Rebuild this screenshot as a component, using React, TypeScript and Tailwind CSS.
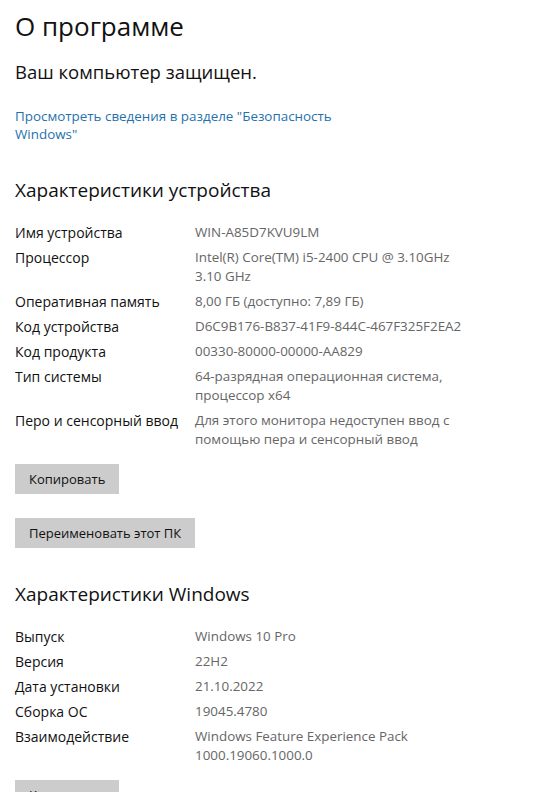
import React from 'react';

type Row = { label: string; value: string[] };

const deviceRows: Row[] = [
  { label: 'Имя устройства', value: ['WIN-A85D7KVU9LM'] },
  { label: 'Процессор', value: ['Intel(R) Core(TM) i5-2400 CPU @ 3.10GHz', '3.10 GHz'] },
  { label: 'Оперативная память', value: ['8,00 ГБ (доступно: 7,89 ГБ)'] },
  { label: 'Код устройства', value: ['D6C9B176-B837-41F9-844C-467F325F2EA2'] },
  { label: 'Код продукта', value: ['00330-80000-00000-AA829'] },
  { label: 'Тип системы', value: ['64-разрядная операционная система,', 'процессор x64'] },
  { label: 'Перо и сенсорный ввод', value: ['Для этого монитора недоступен ввод с', 'помощью пера и сенсорный ввод'] },
];

const windowsRows: Row[] = [
  { label: 'Выпуск', value: ['Windows 10 Pro'] },
  { label: 'Версия', value: ['22H2'] },
  { label: 'Дата установки', value: ['21.10.2022'] },
  { label: 'Сборка ОС', value: ['19045.4780'] },
  { label: 'Взаимодействие', value: ['Windows Feature Experience Pack', '1000.19060.1000.0'] },
];

const SpecTable: React.FC<{ rows: Row[] }> = ({ rows }) => (
  <div className="flex flex-col gap-[6px] mt-[19px] leading-[19px]">
    {rows.map((r) => (
      <div key={r.label} className="flex">
        <div className="w-[180px] shrink-0 text-[14px] text-[#111]">{r.label}</div>
        <div className="text-[13.4px] text-[#666]">
          {r.value.map((v) => (
            <div key={v}>{v}</div>
          ))}
        </div>
      </div>
    ))}
  </div>
);

const Button: React.FC<{ children: React.ReactNode; className?: string }> = ({ children, className }) => (
  <div className={`self-start bg-[#cccccc] px-[14px] py-[5px] text-[13px] leading-[20px] text-[#111] ${className ?? ''}`}>
    {children}
  </div>
);

export default function App() {
  return (
    <div
      className="w-[541px] h-[792px] overflow-hidden bg-white pl-[15px] flex flex-col"
      style={{ fontFamily: '"Open Sans", "Noto Sans", sans-serif' }}
    >
      <h1 className="mt-[8px] text-[26px] leading-[36px] text-[#111] font-normal">О программе</h1>
      <p className="mt-[15px] text-[18.5px] leading-[26px] text-[#111]">Ваш компьютер защищен.</p>
      <a className="mt-[22px] text-[13.4px] leading-[18px] text-[#1f72ad]">
        Просмотреть сведения в разделе "Безопасность
        <br />
        Windows"
      </a>

      <h2 className="mt-[33px] text-[19px] leading-[28px] text-[#111]">Характеристики устройства</h2>
      <SpecTable rows={deviceRows} />
      <Button className="mt-[15px]">Копировать</Button>
      <Button className="mt-[24px]">Переименовать этот ПК</Button>

      <h2 className="mt-[32px] text-[19px] leading-[28px] text-[#111]">Характеристики Windows</h2>
      <SpecTable rows={windowsRows} />
      <Button className="mt-[15px]">Копировать</Button>
    </div>
  );
}
